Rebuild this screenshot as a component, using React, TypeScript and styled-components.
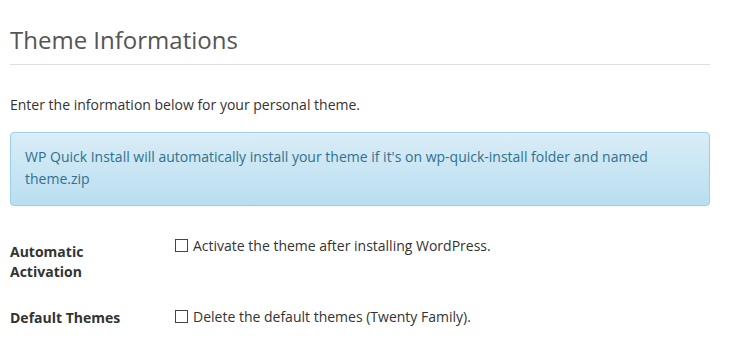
import React from "react";
import styled, { createGlobalStyle } from "styled-components";

const Global = createGlobalStyle`
  html, body { margin: 0; padding: 0; background: #fff; }
  body { font-family: "Open Sans", "Liberation Sans", sans-serif; color: #444; }
`;

const Page = styled.div`
  width: 700px;
  padding: 0 10px;
`;

const Title = styled.h1`
  margin: 0;
  padding: 25px 0 9px;
  font-size: 24px;
  font-weight: 400;
  line-height: 30px;
  color: #555;
  border-bottom: 1px solid #dedede;
`;

const Intro = styled.p`
  margin: 29px 0 0;
  font-size: 14px;
  line-height: 22px;
  color: #333;
`;

const Alert = styled.div`
  margin-top: 16px;
  padding: 13px 14px 15px;
  font-size: 14px;
  line-height: 22px;
  color: #31708f;
  background: linear-gradient(to bottom, #d9edf7 0%, #b9def0 100%);
  border: 1px solid #9acfea;
  border-radius: 4px;
  box-shadow: inset 0 1px 0 rgba(255, 255, 255, 0.25), 0 1px 2px rgba(0, 0, 0, 0.05);
`;

const Table = styled.div`
  margin-top: 24px;
  display: grid;
  grid-template-columns: 165px 1fr;
  row-gap: 19px;
`;

const Label = styled.div<{ $top: number; $width?: string }>`
  padding-top: ${(p) => p.$top}px;
  font-size: 14px;
  font-weight: 700;
  line-height: 20px;
  color: #333;
  width: ${(p) => p.$width ?? "90px"};
`;

const Field = styled.label`
  display: flex;
  align-items: center;
  gap: 5px;
  padding-top: 5px;
  height: 20px;
  font-size: 14px;
  color: #333;
`;

const Box = styled.input`
  appearance: none;
  margin: 0;
  width: 13px;
  height: 13px;
  border: 1px solid #444;
  background: #fff;
  border-radius: 0;
`;

export default function App() {
  return (
    <Page>
      <Global />
      <Title>Theme Informations</Title>
      <Intro>Enter the information below for your personal theme.</Intro>
      <Alert>
        WP Quick Install will automatically install your theme if it's on wp-quick-install folder and named
        theme.zip
      </Alert>
      <Table>
        <Label $top={12}>Automatic Activation</Label>
        <div>
          <Field>
            <Box type="checkbox" />
            Activate the theme after installing WordPress.
          </Field>
        </div>
        <Label $top={7} $width="auto">Default Themes</Label>
        <div>
          <Field>
            <Box type="checkbox" />
            Delete the default themes (Twenty Family).
          </Field>
        </div>
      </Table>
    </Page>
  );
}
